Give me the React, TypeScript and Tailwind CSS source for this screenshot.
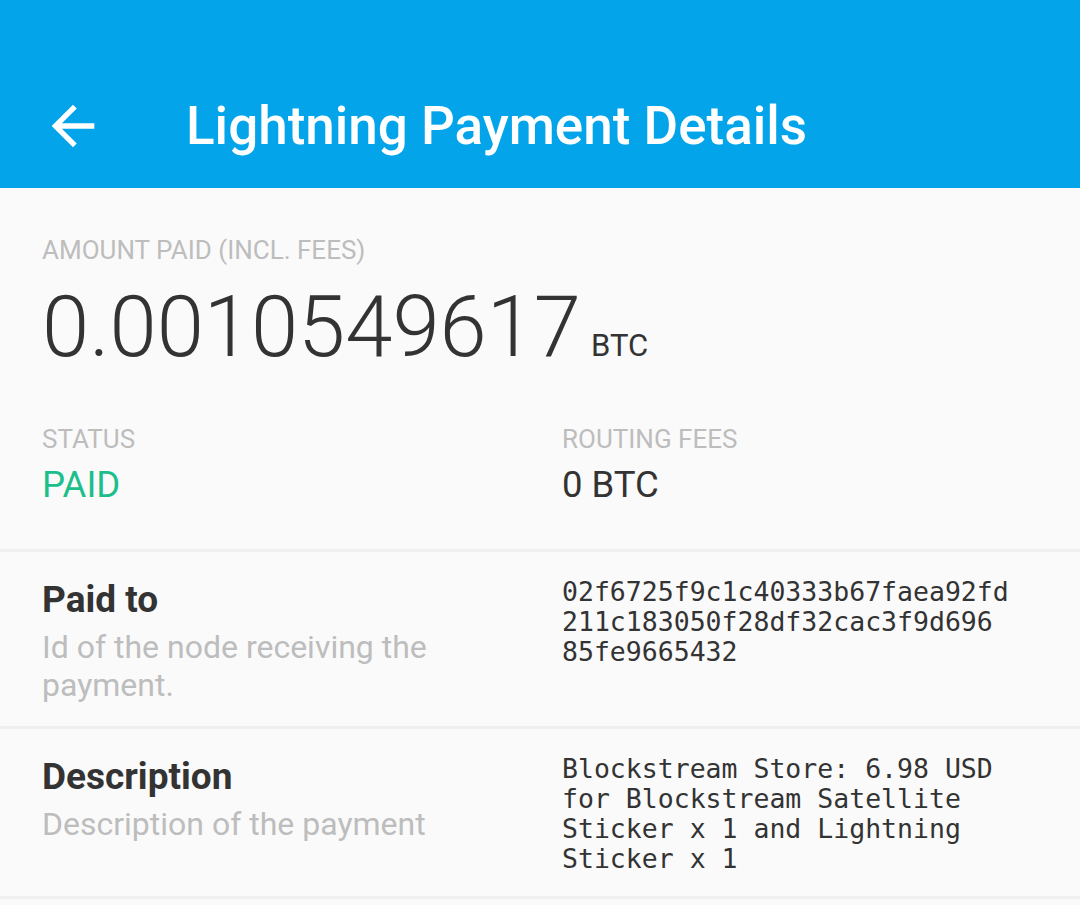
import { ReactNode } from "react"

function BackArrow() {
    return (
        <svg viewBox="0 0 24 24" className="h-16 w-16 shrink-0" fill="#ffffff">
            <path d="M20 11H7.83l5.59-5.59L12 4l-8 8 8 8 1.41-1.41L7.83 13H20v-2z" />
        </svg>
    )
}

function Label({ children }: { children: ReactNode }) {
    return <div className="text-[26px] leading-[28px] text-[#bdbdbd] uppercase">{children}</div>
}

function DetailRow({ title, hint, value }: { title: string; hint: string; value: string }) {
    return (
        <div className="grid grid-cols-[520px_1fr] border-b-[3px] border-[#efefef] pl-[42px]">
            <div className="pt-[28px] pb-[22px]">
                <div className="text-[37px] leading-[40px] font-bold text-[#333333]">{title}</div>
                <div className="mt-2 max-w-[470px] text-[32px] leading-[38px] text-[#bdbdbd]">{hint}</div>
            </div>
            <div className="w-[452px] pt-[25px] pb-[22px] font-['DejaVu_Sans_Mono',monospace] text-[26.5px] leading-[30px] whitespace-pre-line text-[#333333]">
                {value}
            </div>
        </div>
    )
}

export default function App() {
    return (
        <div className="min-h-[905px] w-[1080px] bg-[#fafafa] font-['Roboto',sans-serif]">
            <header className="bg-[#03a4e9] pt-[63px]">
                <div className="flex h-[125px] items-center pl-[41px]">
                    <BackArrow />
                    <h1 className="ml-[81px] text-[53px] leading-[60px] font-medium text-white">
                        Lightning Payment Details
                    </h1>
                </div>
            </header>

            <section className="border-b-[3px] border-[#efefef] px-[42px] pt-[48px] pb-[44px]">
                <Label>Amount paid (incl. fees)</Label>
                <div className="mt-5 flex items-baseline gap-[10px] text-[#333333]">
                    <span className="text-[85px] leading-[86px] font-light">0.0010549617</span>
                    <span className="text-[31px] leading-[28px]">BTC</span>
                </div>

                <div className="mt-[55px] grid grid-cols-[520px_1fr]">
                    <div>
                        <Label>Status</Label>
                        <div className="mt-[12px] text-[36.5px] leading-[40px] text-[#1cbf8c]">PAID</div>
                    </div>
                    <div>
                        <Label>Routing fees</Label>
                        <div className="mt-[12px] text-[36.5px] leading-[40px] text-[#333333]">0 BTC</div>
                    </div>
                </div>
            </section>

            <DetailRow
                title="Paid to"
                hint="Id of the node receiving the payment."
                value={"02f6725f9c1c40333b67faea92fd\n211c183050f28df32cac3f9d696\n85fe9665432"}
            />
            <DetailRow
                title="Description"
                hint="Description of the payment"
                value="Blockstream Store: 6.98 USD for Blockstream Satellite Sticker x 1 and Lightning Sticker x 1"
            />
        </div>
    )
}
